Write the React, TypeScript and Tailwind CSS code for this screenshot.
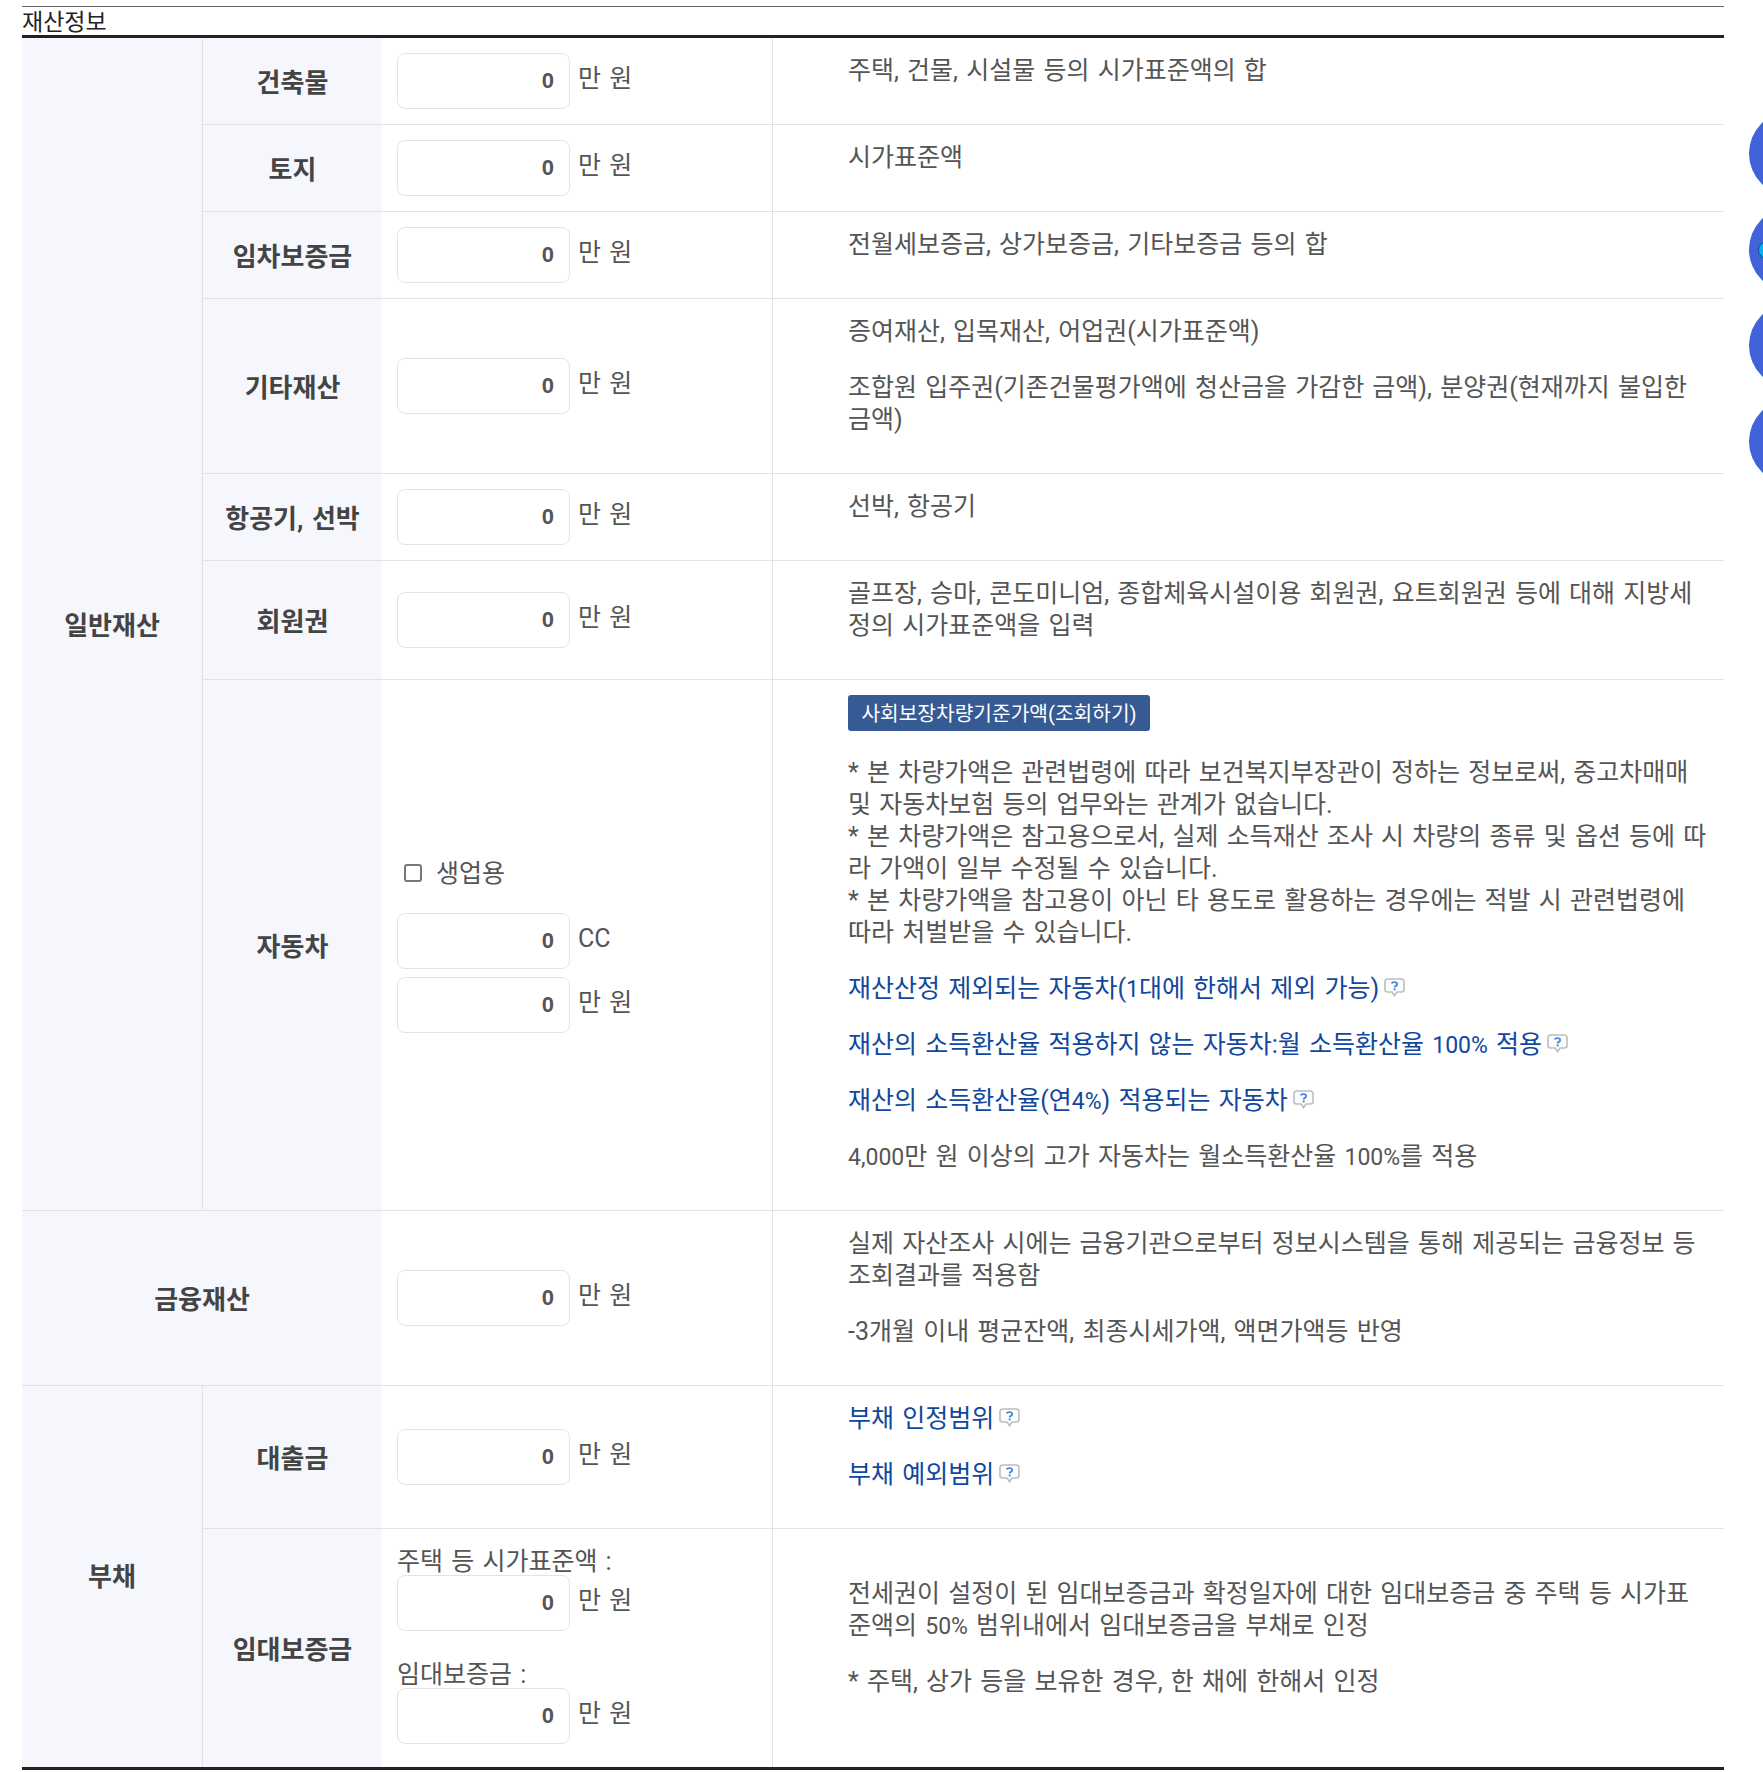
import React from "react";

const Help = () => (
  <svg width="21" height="19" viewBox="0 0 21 19" className="inline-block align-top mt-[5px] ml-[5px]">
    <path d="M3.5 1h14a2.5 2.5 0 0 1 2.5 2.5v8a2.5 2.5 0 0 1-2.5 2.5h-4.5l-2.5 3.5-2.5-3.5h-4.500a2.500 2.500 0 0 1-2.500-2.500v-8a2.500 2.500 0 0 1 2.500-2.500z" fill="#fdfdfd" stroke="#b9bebe" strokeWidth="1.6" />
    <path d="M7.700 5.400c.5-1.700 5.200-1.900 5.500.6.200 1.900-2.600 1.800-2.600 3.400" fill="none" stroke="#3f8ae0" strokeWidth="1.800" />
    <rect x="9.700" y="10.500" width="1.900" height="1.900" fill="#3f8ae0" />
  </svg>
);

const Amount = ({ unit = "만 원" }: { unit?: string }) => (
  <div className="flex items-center">
    <input
      type="text"
      readOnly
      value="0"
      className="w-[173px] h-[56px] rounded-[8px] border border-[#e3e3e3] bg-white pr-[15px] text-right text-[22px] font-bold text-[#555] outline-none [font-family:'Liberation_Sans',sans-serif]"
    />
    <span className="ml-[8px] -mt-[5px]">{unit}</span>
  </div>
);

const N = ({ children }: { children: React.ReactNode }) => <span className="text-[23px] leading-none">{children}</span>;

const L = ({ children }: { children: React.ReactNode }) => (
  <p className="mb-6 text-[#11479e]">
    {children}
    <Help />
  </p>
);

const P = ({ children }: { children: React.ReactNode }) => <p className="mb-6">{children}</p>;

const thBase =
  "bg-[#f5f7fc] border-b border-[#e2e2e2] text-center align-middle font-bold text-[#444] text-[26px] pt-[3px]";
const th2 = thBase + " ";
const th1 = thBase + " border-r";
const inputCell = "border-b border-[#e2e2e2] border-r pl-[15px] align-middle";
const descBase = "border-b border-[#e2e2e2] pl-[75px] pr-[15px] pb-[13px] align-middle";
const descCell = descBase + " pt-[17px]";

export default function App() {
  return (
    <div className="relative h-[1772px] w-[1763px] overflow-hidden bg-white pt-[6px] text-[25px] leading-8 text-[#555] [word-spacing:2px] [font-family:'Roboto','Noto_Sans_CJK_KR',sans-serif]">
      <div className="ml-[22px] w-[1702px]">
        <div className="h-[29px] border-t border-[#666] text-[23px] leading-[32px] text-[#222] [word-spacing:0]">재산정보</div>
        <table className="w-[1702px] table-fixed border-separate border-spacing-0 border-y-[3px] border-[#222]">
          <colgroup>
            <col className="w-[181px]" />
            <col className="w-[179px]" />
            <col className="w-[391px]" />
            <col className="w-[951px]" />
          </colgroup>
          <tbody>
            <tr>
              <th rowSpan={7} className={th1}>일반재산</th>
              <th className={th2}>건축물</th>
              <td className={inputCell}><Amount /></td>
              <td className={descCell}><P>주택, 건물, 시설물 등의 시가표준액의 합</P></td>
            </tr>
            <tr>
              <th className={th2}>토지</th>
              <td className={inputCell}><Amount /></td>
              <td className={descCell}><P>시가표준액</P></td>
            </tr>
            <tr>
              <th className={th2}>임차보증금</th>
              <td className={inputCell}><Amount /></td>
              <td className={descCell}><P>전월세보증금, 상가보증금, 기타보증금 등의 합</P></td>
            </tr>
            <tr>
              <th className={th2}>기타재산</th>
              <td className={inputCell}><Amount /></td>
              <td className={descCell}>
                <P>증여재산, 입목재산, 어업권(시가표준액)</P>
                <P>조합원 입주권(기존건물평가액에 청산금을 가감한 금액), 분양권(현재까지 불입한 금액)</P>
              </td>
            </tr>
            <tr>
              <th className={th2}>항공기, 선박</th>
              <td className={inputCell}><Amount /></td>
              <td className={descCell}><P>선박, 항공기</P></td>
            </tr>
            <tr>
              <th className={th2}>회원권</th>
              <td className={inputCell}><Amount /></td>
              <td className={descCell}><P>골프장, 승마, 콘도미니엄, 종합체육시설이용 회원권, 요트회원권 등에 대해 지방세정의 시가표준액을 입력</P></td>
            </tr>
            <tr>
              <th className={th2}>자동차</th>
              <td className={inputCell}>
                <label className="ml-[7px] mb-[24px] flex h-[32px] items-center">
                  <input type="checkbox" className="h-[18px] w-[18px] appearance-none rounded-[3px] border-2 border-[#777] bg-white" />
                  <span className="ml-[14px] pt-[2px]">생업용</span>
                </label>
                <div className="mb-[8px]"><Amount unit="CC" /></div>
                <Amount />
              </td>
              <td className={descBase + " pt-[15px]"}>
                <div className="mb-[26px]">
                  <button className="h-[36px] w-[302px] rounded-[3px] bg-[#355a94] pt-[1px] text-[20.3px] leading-[36px] text-white [word-spacing:0]">사회보장차량기준가액(조회하기)</button>
                </div>
                <P>
                  * 본 차량가액은 관련법령에 따라 보건복지부장관이 정하는 정보로써, 중고차매매 및 자동차보험 등의 업무와는 관계가 없습니다.
                  <br />* 본 차량가액은 참고용으로서, 실제 소득재산 조사 시 차량의 종류 및 옵션 등에 따라 가액이 일부 수정될 수 있습니다.
                  <br />* 본 차량가액을 참고용이 아닌 타 용도로 활용하는 경우에는 적발 시 관련법령에 따라 처벌받을 수 있습니다.
                </P>
                <L>재산산정 제외되는 자동차(<N>1</N>대에 한해서 제외 가능)</L>
                <L>재산의 소득환산율 적용하지 않는 자동차:월 소득환산율 <N>100%</N> 적용</L>
                <L>재산의 소득환산율(연<N>4%</N>) 적용되는 자동차</L>
                <P><N>4,000</N>만 원 이상의 고가 자동차는 월소득환산율 <N>100%</N>를 적용</P>
              </td>
            </tr>
            <tr>
              <th colSpan={2} className={th2}>금융재산</th>
              <td className={inputCell}><Amount /></td>
              <td className={descCell}>
                <P>실제 자산조사 시에는 금융기관으로부터 정보시스템을 통해 제공되는 금융정보 등 조회결과를 적용함</P>
                <P>-3개월 이내 평균잔액, 최종시세가액, 액면가액등 반영</P>
              </td>
            </tr>
            <tr>
              <th rowSpan={2} className={th1 + " border-b-0 pb-[2px]"}>부채</th>
              <th className={th2}>대출금</th>
              <td className={inputCell}><Amount /></td>
              <td className={descCell}>
                <L>부채 인정범위</L>
                <L>부채 예외범위</L>
              </td>
            </tr>
            <tr>
              <th className={th2 + " h-[238px] border-b-0"}>임대보증금</th>
              <td className={inputCell + " border-b-0 pb-[9px]"}>
                <div className="h-[32px] pt-[3px]">주택 등 시가표준액 :</div>
                <Amount />
                <div className="mt-[25px] h-[32px] pt-[3px]">임대보증금 :</div>
                <Amount />
              </td>
              <td className={descCell + " border-b-0"}>
                <P>전세권이 설정이 된 임대보증금과 확정일자에 대한 임대보증금 중 주택 등 시가표준액의 <N>50%</N> 범위내에서 임대보증금을 부채로 인정</P>
                <P>* 주택, 상가 등을 보유한 경우, 한 채에 한해서 인정</P>
              </td>
            </tr>
          </tbody>
        </table>
      </div>
      <div className="absolute left-[1749px] top-[111px] h-[85px] w-[85px] rounded-full bg-[#4162da]" />
      <div className="absolute left-[1749px] top-[207px] h-[85px] w-[85px] rounded-full bg-[#4162da]">
        <div className="absolute left-[9px] top-[34px] h-[18px] w-[18px] rounded-full border border-[#14507a] bg-[#00b4f0]" />
      </div>
      <div className="absolute left-[1749px] top-[303px] h-[85px] w-[85px] rounded-full bg-[#4162da]" />
      <div className="absolute left-[1749px] top-[399px] h-[85px] w-[85px] rounded-full bg-[#4162da]" />
    </div>
  );
}
